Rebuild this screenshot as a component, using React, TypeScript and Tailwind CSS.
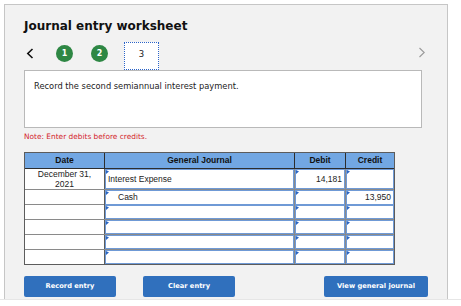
import React from "react";

const verdana = { fontFamily: '"DejaVu Sans", Verdana, sans-serif' };
const arial = { fontFamily: '"Liberation Sans", Arial, sans-serif' };

const COLS = "grid grid-cols-[80px_190px_51px_48px]";

type Row = {
  date?: string[];
  account?: string;
  indent?: boolean;
  debit?: string;
  credit?: string;
  tall?: boolean;
};

const rows: Row[] = [
  { date: ["December 31,", "2021"], account: "Interest Expense", debit: "14,181", tall: true },
  { account: "Cash", indent: true, credit: "13,950" },
  {},
  {},
  {},
  {},
];

function Marker() {
  return (
    <svg className="absolute left-[1px] top-[1px]" width="3" height="4" viewBox="0 0 3 4">
      <polygon points="0,0 3,1.5 0,4" fill="#2a66c4" />
    </svg>
  );
}

function InputCell({ children, align = "left", last = false }: { children?: React.ReactNode; align?: "left" | "right"; last?: boolean }) {
  return (
    <div className={`relative h-full ${last ? "" : "border-r border-[#8a8a8a]"}`}>
      <div
        className={`flex h-full items-center border border-[#6f9ad6] bg-white px-[2px] text-[8.5px] text-[#222] ${
          align === "right" ? "justify-end" : "justify-start"
        }`}
        style={arial}
      >
        {children}
      </div>
      <Marker />
    </div>
  );
}

export default function App() {
  return (
    <div className="h-[306px] w-[461px] bg-white pt-[4px]">
      <div className="ml-[4px] h-[295px] w-[444px] border border-b-0 border-[#c6c6c6] bg-[#f2f2f2] pl-[19px]">
        <h1 className="pt-[13px] text-[12px] font-bold leading-[16px] text-[#111]" style={verdana}>
          Journal entry worksheet
        </h1>

        {/* step navigation */}
        <div className="mt-[8px] flex h-[28px] items-start">
          <svg className="ml-[2px] mt-[6px]" width="8" height="11" viewBox="0 0 8 11">
            <path d="M6.5 1 L1.8 5.5 L6.5 10" fill="none" stroke="#111" strokeWidth="1.6" />
          </svg>
          <div
            className="ml-[22px] mt-[3px] flex h-[17px] w-[17px] items-center justify-center rounded-full bg-[#2e8744] text-[8px] font-bold text-white"
            style={verdana}
          >
            1
          </div>
          <div
            className="ml-[18px] mt-[3px] flex h-[17px] w-[17px] items-center justify-center rounded-full bg-[#2e8744] text-[8px] font-bold text-white"
            style={verdana}
          >
            2
          </div>
          <div
            className="ml-[16px] flex h-[28px] w-[35px] justify-center border border-dotted border-[#2c64c8] bg-white pt-[5px] text-[8.5px] leading-[12px] text-[#222]"
            style={verdana}
          >
            3
          </div>
          <svg className="ml-auto mr-[21px] mt-[5px]" width="8" height="11" viewBox="0 0 8 11">
            <path d="M1.5 1 L6.2 5.5 L1.5 10" fill="none" stroke="#9a9a9a" strokeWidth="1.1" />
          </svg>
        </div>

        {/* prompt */}
        <div className="h-[58px] w-[398px] border border-[#b9b9b9] bg-white pl-[9px] pt-[9px]">
          <p className="text-[8.3px] leading-[12px] text-[#222]" style={verdana}>
            Record the second semiannual interest payment.
          </p>
        </div>

        <p className="mt-[4px] text-[7.4px] leading-[10px] text-[#d2232a]" style={verdana}>
          Note: Enter debits before credits.
        </p>

        {/* journal table */}
        <div className="mt-[10px] w-[371px] border border-[#5c5c5c] bg-white" style={arial}>
          <div className={`${COLS} h-[16px] border-b border-[#2d2d2d] bg-[#72a7e3] text-[8.5px] font-bold text-[#111]`}>
            <div className="flex items-center justify-center border-r border-[#2d2d2d]">Date</div>
            <div className="flex items-center justify-center border-r border-[#2d2d2d]">General Journal</div>
            <div className="flex items-center justify-center border-r border-[#2d2d2d]">Debit</div>
            <div className="flex items-center justify-center">Credit</div>
          </div>
          {rows.map((r, i) => (
            <div
              key={i}
              className={`${COLS} ${r.tall ? "h-[20px]" : "h-[15px]"} ${i > 0 ? "border-t border-[#8a8a8a]" : ""}`}
            >
              <div className="flex flex-col items-center justify-center border-r border-[#5c5c5c] text-[8.5px] leading-[10px] text-[#222]">
                {r.date?.map((d) => (
                  <span key={d}>{d}</span>
                ))}
              </div>
              <InputCell>
                <span className={r.indent ? "pl-[10px]" : ""}>{r.account}</span>
              </InputCell>
              <InputCell align="right">{r.debit}</InputCell>
              <InputCell align="right" last>
                {r.credit}
              </InputCell>
            </div>
          ))}
        </div>

        {/* actions */}
        <div className="mt-[11px] flex w-[404px] items-center text-[6.7px] font-bold text-white" style={verdana}>
          <button className="h-[21px] w-[92px] rounded-[2px] bg-[#3070bd]">Record entry</button>
          <button className="ml-[27px] h-[21px] w-[92px] rounded-[2px] bg-[#3070bd]">Clear entry</button>
          <button className="ml-auto h-[21px] w-[104px] rounded-[2px] bg-[#3070bd]">View general journal</button>
        </div>
      </div>
      <div className="h-[1px] w-full bg-[#e6e6e6]" />
    </div>
  );
}
